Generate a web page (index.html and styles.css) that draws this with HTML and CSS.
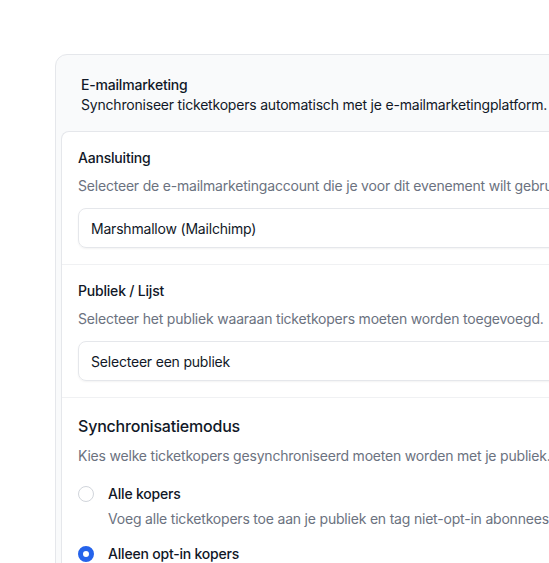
FILE: index.html
```html
<!DOCTYPE html>
<html lang="nl">
<head>
<meta charset="utf-8">
<link rel="stylesheet" href="styles.css">
</head>
<body>
<div class="page">
  <div class="card">
    <div class="card-header">
      <div class="card-title">E-mailmarketing</div>
      <div class="card-sub">Synchroniseer ticketkopers automatisch met je e-mailmarketingplatform.</div>
    </div>
    <div class="inner">
      <div class="section">
        <div class="label">Aansluiting</div>
        <div class="desc">Selecteer de e-mailmarketingaccount die je voor dit evenement wilt gebruiken.</div>
        <div class="select">Marshmallow (Mailchimp)</div>
      </div>
      <div class="section">
        <div class="label">Publiek / Lijst</div>
        <div class="desc">Selecteer het publiek waaraan ticketkopers moeten worden toegevoegd.</div>
        <div class="select">Selecteer een publiek</div>
      </div>
      <div class="section">
        <div class="label big">Synchronisatiemodus</div>
        <div class="desc">Kies welke ticketkopers gesynchroniseerd moeten worden met je publiek.</div>
        <div class="options">
          <div class="option">
            <span class="radio"></span>
            <div class="opt-text">
              <div class="opt-label">Alle kopers</div>
              <div class="opt-desc">Voeg alle ticketkopers toe aan je publiek en tag niet-opt-in abonnees.</div>
            </div>
          </div>
          <div class="option">
            <span class="radio checked"></span>
            <div class="opt-text">
              <div class="opt-label">Alleen opt-in kopers</div>
              <div class="opt-desc">Voeg alleen kopers toe die toestemming hebben gegeven.</div>
            </div>
          </div>
        </div>
      </div>
    </div>
  </div>
</div>
</body>
</html>
```
FILE: styles.css
```css
html, body {
  margin: 0;
  padding: 0;
  background: #ffffff;
  font-family: Inter, "Noto Sans", sans-serif;
  color: #111827;
  letter-spacing: -0.2px;
  overflow: hidden;
}
.page {
  padding: 54px 0 0 55px;
  width: 700px;
}
.card {
  background: #f9fafb;
  border: 1px solid #e5e7eb;
  border-radius: 12px;
  padding: 0 0 0 5px;
}
.card-header {
  padding: 20px 20px 16px 20px;
  font-size: 14px;
  line-height: 20px;
}
.card-title {
  font-weight: 500;
}
.card-sub {
  color: #111827;
}
.inner {
  background: #fff;
  border: 1px solid #e5e7eb;
  border-right: none;
  border-radius: 8px 0 0 0;
}
.section {
  padding: 16px 16px 16px 16px;
  border-bottom: 1px solid #f0f1f3;
}
.label {
  font-size: 14px;
  line-height: 20px;
  font-weight: 500;
}
.label.big {
  font-size: 16px;
  line-height: 24px;
}
.desc {
  font-size: 14px;
  line-height: 20px;
  color: #6b7280;
  margin-top: 8px;
  white-space: nowrap;
}
.select {
  margin-top: 12px;
  height: 38px;
  border: 1px solid #e5e7eb;
  border-radius: 8px;
  padding: 0 12px;
  display: flex;
  align-items: center;
  font-size: 14px;
  box-shadow: 0 1px 2px rgba(0,0,0,0.05);
}
.options {
  display: flex;
  flex-direction: column;
  gap: 15px;
  margin-top: 18px;
}
.option {
  display: flex;
  gap: 14px;
  white-space: nowrap;
}
.radio {
  flex: none;
  width: 16px;
  height: 16px;
  border: 1px solid #d1d5db;
  border-radius: 50%;
  box-sizing: border-box;
  margin-top: 2px;
  background: #fff;
}
.radio.checked {
  border: 5px solid #2563eb;
}
.opt-label {
  font-size: 14px;
  line-height: 20px;
  font-weight: 500;
}
.opt-desc {
  font-size: 14px;
  line-height: 20px;
  color: #6b7280;
  margin-top: 5px;
}
```
